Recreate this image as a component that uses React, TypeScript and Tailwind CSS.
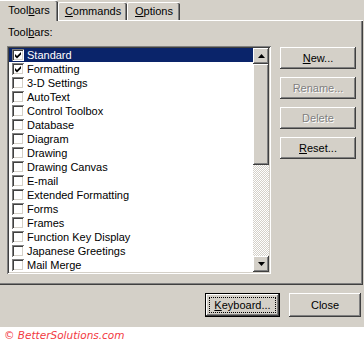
const raised =
  "bg-[#d4d0c8] shadow-[inset_-1px_-1px_#404040,inset_1px_1px_#ffffff,inset_-2px_-2px_#808080,inset_2px_2px_#d4d0c8]";

const toolbars = [
  { name: "Standard", checked: true, selected: true },
  { name: "Formatting", checked: true },
  { name: "3-D Settings" },
  { name: "AutoText" },
  { name: "Control Toolbox" },
  { name: "Database" },
  { name: "Diagram" },
  { name: "Drawing" },
  { name: "Drawing Canvas" },
  { name: "E-mail" },
  { name: "Extended Formatting" },
  { name: "Forms" },
  { name: "Frames" },
  { name: "Function Key Display" },
  { name: "Japanese Greetings" },
  { name: "Mail Merge" },
];

function CheckBox({ checked }: { checked?: boolean }) {
  return (
    <span className="w-[12px] h-[12px] shrink-0 bg-white shadow-[inset_1px_1px_#808080,inset_-1px_-1px_#ffffff,inset_2px_2px_#404040,inset_-2px_-2px_#d4d0c8] flex items-center justify-center">
      {checked && (
        <svg viewBox="0 0 12 12" className="w-[12px] h-[12px]">
          <path d="M3 5 L5 7 L9 3 L9 5.5 L5 9.5 L3 7.5 Z" fill="#000" />
        </svg>
      )}
    </span>
  );
}

function Arrow({ down }: { down?: boolean }) {
  return (
    <svg viewBox="0 0 7 4" className="w-[7px] h-[4px]">
      <path d={down ? "M0 0 H7 L3.5 4 Z" : "M3.5 0 L7 4 H0 Z"} fill="#000" />
    </svg>
  );
}

function SideButton({ children, disabled }: { children: React.ReactNode; disabled?: boolean }) {
  return (
    <div
      className={`${raised} w-[76px] h-[22px] flex items-center justify-center ${
        disabled ? "text-[#808080] [text-shadow:1px_1px_#ffffff]" : "text-black"
      }`}
    >
      {children}
    </div>
  );
}

export default function App() {
  return (
    <div className="w-[364px] h-[344px] bg-white overflow-hidden font-['Liberation_Sans',Arial,sans-serif] text-[11px] text-black">
      <div className="h-[327px] bg-[#d4d0c8] flex flex-col">
        {/* Tabs */}
        <div className="relative z-10 flex items-end h-[21px]">
          <div className="h-[21px] w-[58px] bg-[#d4d0c8] border-t border-white shadow-[inset_-1px_0_#404040,inset_-2px_0_#808080] rounded-tr-[2px] flex items-center justify-center pb-[1px]">
            <span>
              Tool<u>b</u>ars
            </span>
          </div>
          <div className="h-[18px] mb-[1px] w-[69px] border-t border-l border-white shadow-[inset_-1px_0_#404040,inset_-2px_0_#808080] rounded-t-[2px] flex items-center justify-center">
            <span>
              <u>C</u>ommands
            </span>
          </div>
          <div className="h-[18px] mb-[1px] w-[53px] border-t border-l border-white shadow-[inset_-1px_0_#404040,inset_-2px_0_#808080] rounded-t-[2px] flex items-center justify-center">
            <span>
              <u>O</u>ptions
            </span>
          </div>
        </div>

        {/* Tab page */}
        <div className="-mt-px h-[265px] mr-px border-t border-white shadow-[inset_-1px_-1px_#404040,inset_-2px_-2px_#808080] pl-[7px] flex">
          <div className="flex flex-col pt-[4px]">
            <div className="h-[14px] leading-[14px] pl-[1px] mb-[7px]">
              Tool<u>b</u>ars:
            </div>
            <div className="w-[264px] h-[228px] bg-white p-[2px] flex shadow-[inset_1px_1px_#808080,inset_-1px_-1px_#ffffff,inset_2px_2px_#404040,inset_-2px_-2px_#d4d0c8]">
              <div className="w-[244px] flex flex-col">
                {toolbars.map((t) => (
                  <div
                    key={t.name}
                    className={`h-[14px] flex items-center pl-[3px] ${
                      t.selected ? "bg-[#0a246a] text-white" : "text-black"
                    }`}
                  >
                    <CheckBox checked={t.checked} />
                    <span className="ml-[3px] leading-[14px] whitespace-nowrap">{t.name}</span>
                  </div>
                ))}
              </div>
              <div className="w-[16px] flex flex-col">
                <div className={`${raised} h-[16px] flex items-center justify-center`}>
                  <Arrow />
                </div>
                <div className={`${raised} h-[101px]`} />
                <div className="flex-1 bg-[repeating-conic-gradient(#d4d0c8_0_25%,#ffffff_0_50%)] bg-[length:2px_2px]" />
                <div className={`${raised} h-[16px] flex items-center justify-center`}>
                  <Arrow down />
                </div>
              </div>
            </div>
          </div>

          <div className="ml-[9px] mt-[26px] flex flex-col gap-[8px]">
            <SideButton>
              <span>
                <u>N</u>ew...
              </span>
            </SideButton>
            <SideButton disabled>Rename...</SideButton>
            <SideButton disabled>Delete</SideButton>
            <SideButton>
              <span>
                <u>R</u>eset...
              </span>
            </SideButton>
          </div>
        </div>

        {/* Dialog buttons */}
        <div className="flex justify-end gap-[9px] pr-[3px] mt-[8px]">
          <div className="w-[75px] h-[24px] border border-black">
            <div className={`${raised} w-full h-full p-[3px]`}>
              <div className="w-full h-full border border-dotted border-black flex items-center justify-center">
                <span>
                  <u>K</u>eyboard...
                </span>
              </div>
            </div>
          </div>
          <div className={`${raised} w-[72px] h-[24px] flex items-center justify-center`}>Close</div>
        </div>
      </div>

      <div className="h-[17px] leading-[17px] pl-[4px] italic text-[10.5px] text-[#f23a3f] font-['DejaVu_Sans',Verdana,sans-serif]">
        © BetterSolutions.com
      </div>
    </div>
  );
}
